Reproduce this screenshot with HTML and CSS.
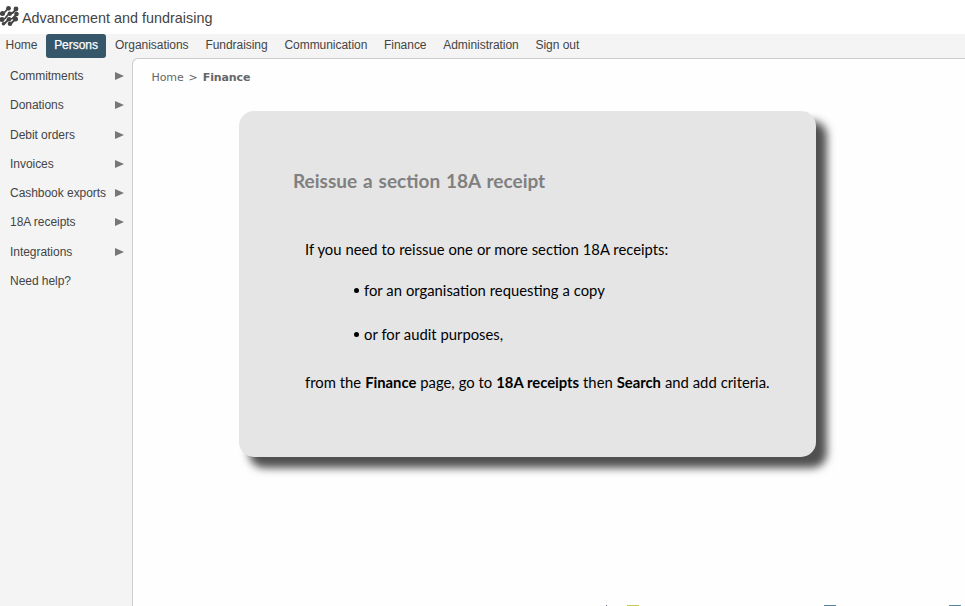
FILE: index.html
```
<!DOCTYPE html>
<html lang="en">
<head>
<meta charset="utf-8">
<title>Advancement and fundraising</title>
<link rel="stylesheet" href="styles.css">
</head>
<body>
<header class="brand">
  <svg class="logo" viewBox="0 0 20 22" width="20" height="22" aria-hidden="true">
    <g stroke="#444" stroke-width="1.8" fill="none" stroke-linejoin="round">
      <path d="M0 9L4 8L8.500 3M0 15L5 13.500L9 8.500L12.500 8L16.500 4M4 19L8.500 14.500L12.500 13.500L17 9M10 19.500L15 14.500"/>
    </g>
    <g fill="#444">
      <circle cx="8.500" cy="3.300" r="2.400"/><circle cx="16" cy="4" r="2.400"/>
      <circle cx="2.500" cy="8.500" r="2.500"/><circle cx="9.800" cy="8.800" r="2.200"/><circle cx="16.500" cy="9" r="2.300"/>
      <circle cx="2" cy="14.500" r="2.500"/><circle cx="9" cy="14.300" r="2.300"/><circle cx="15.500" cy="14" r="2.500"/>
      <circle cx="3.500" cy="18.800" r="1.800"/><circle cx="10" cy="18.800" r="2.300"/>
    </g>
  </svg>
  <span class="brand-name">Advancement and fundraising</span>
</header>
<nav class="topnav">
  <a>Home</a><a class="active">Persons</a><a>Organisations</a><a>Fundraising</a><a>Communication</a><a>Finance</a><a>Administration</a><a>Sign out</a>
</nav>
<div class="body">
  <aside class="side">
    <a>Commitments<i></i></a>
    <a>Donations<i></i></a>
    <a>Debit orders<i></i></a>
    <a>Invoices<i></i></a>
    <a>Cashbook exports<i></i></a>
    <a>18A receipts<i></i></a>
    <a>Integrations<i></i></a>
    <a>Need help?</a>
  </aside>
  <main class="content">
    <div class="crumbs"><span>Home</span><span>&gt;</span><b>Finance</b></div>
    <section class="card">
      <h1>Reissue a section 18A receipt</h1>
      <p class="intro">If you need to reissue one or more section 18A receipts:</p>
      <ul>
        <li class="first">for an organisation requesting a copy</li>
        <li class="second">or for audit purposes,</li>
      </ul>
      <p class="outro">from the <b>Finance</b> page, go to <b>18A receipts</b> then <b>Search</b> and add criteria.</p>
    </section>
    <div class="edge"><i class="tick"></i><i class="olive"></i><i class="blue"></i><i class="blue last"></i></div>
  </main>
</div>
</body>
</html>
```
FILE: styles.css
```
* { box-sizing: border-box; }
body {
  margin: 0;
  height: 606px;
  overflow: hidden;
  display: flex;
  flex-direction: column;
  background: #f4f4f4;
  color: #444;
  font: 12px/16px "Liberation Sans", Arial, sans-serif;
  letter-spacing: -.04px;
}
.brand { height: 34px; background: #fff; display: flex; align-items: flex-start; padding-top: 5px; }
.logo { flex: none; }
.brand-name { font-size: 14.4px; line-height: 26px; margin-left: 2px; letter-spacing: 0; }
.topnav { height: 24px; display: flex; align-items: stretch; white-space: nowrap; }
.topnav a { padding: 0 8.4px; line-height: 22px; }
.topnav a:first-child { padding: 0 8.700px 0 5.5px; }
.topnav .active { background: #365669; color: #fff; border-radius: 3px; padding: 0 8.1px; margin-right: .7px; -webkit-text-stroke: .25px #fff; }
.body { flex: 1; display: flex; min-height: 0; }
.side { width: 132px; padding: 3.500px 8px 0 10px; }
.side a { display: flex; justify-content: space-between; align-items: center; height: 29.25px; white-space: nowrap; }
.side i { border-left: 9px solid #777; border-top: 4.500px solid transparent; border-bottom: 4.500px solid transparent; }
.content {
  flex: 1;
  display: flex;
  flex-direction: column;
  background: #fefefe;
  border: solid #ccc;
  border-width: 1px 0 0 1px;
  border-top-left-radius: 6px;
}
.crumbs { display: flex; gap: 5px; height: 52px; padding: 10.500px 0 0 18.500px; font: 11px/16px "DejaVu Sans", Verdana, sans-serif; letter-spacing: -.1px; color: #666; }
.card {
  width: 577px;
  height: 346px;
  flex: none;
  margin-left: 105.500px;
  padding: 56px 0 0 54.500px;
  background: #e5e5e5;
  border-radius: 15px;
  box-shadow: 10.500px 10.500px 8px #505050;
  color: #000;
  font: 14.800px/20px Lato, Calibri, sans-serif;
  letter-spacing: 0;
  word-spacing: .17px;
  white-space: nowrap;
}
.card h1 { margin: 0; font-size: 19px; line-height: 28px; color: #808080; word-spacing: 1.300px; }
.card p { margin: 0 0 0 12px; }
.card .intro { margin-top: 44px; }
.card ul { margin: 0; padding: 0 0 0 60px; list-style: none; }
.card li { display: flex; align-items: center; }
.card li::before { content: ""; width: 5px; height: 5px; border-radius: 50%; background: #000; margin: 0 5px 0 1px; }
.card .first { margin-top: 21px; }
.card .second { margin-top: 24px; }
.card .outro { margin-top: 28px; }
.edge { display: flex; height: 1px; margin-top: auto; padding-left: 473px; }
.edge i { width: 12px; }
.edge .tick { width: 1px; background: #667; }
.edge .olive { background: #c6c95c; margin-left: 20px; }
.edge .blue { background: #55859d; margin-left: 185px; }
.edge .last { margin-left: 113px; }
```
